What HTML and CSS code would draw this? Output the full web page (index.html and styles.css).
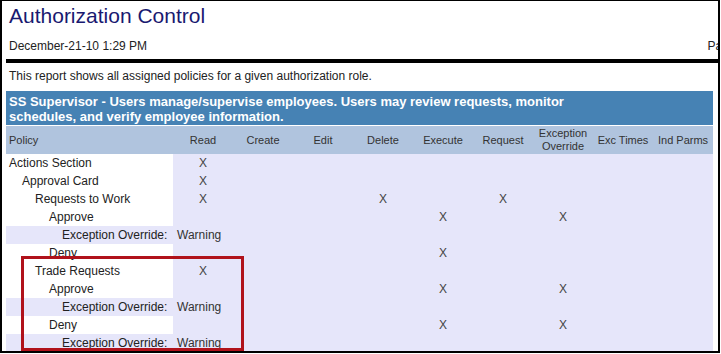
FILE: index.html
```html
<!DOCTYPE html>
<html lang="en">
<head>
    <meta charset="UTF-8">
    <meta name="viewport" content="width=device-width, initial-scale=1.0">
    <title>Authorization Control</title>
    <link rel="stylesheet" href="styles.css">
</head>
<body>
    <div class="frame">
        <h1 class="title">Authorization Control</h1>
        <div class="meta">
            <span>December-21-10 1:29 PM</span>
            <span class="page-no">Page 1 of 1</span>
        </div>
        <div class="rule"></div>
        <p class="intro">This report shows all assigned policies for a given authorization role.</p>

        <table class="policy-table">
            <colgroup>
                <col class="col-policy">
                <col span="9" class="col-flag">
            </colgroup>
            <thead>
                <tr class="role">
                    <th colspan="10"><div class="role-text">SS Supervisor - Users manage/supervise employees. Users may review requests, monitor schedules, and verify employee information.</div></th>
                </tr>
                <tr class="cols">
                    <th class="policy">Policy</th>
                    <th>Read</th>
                    <th>Create</th>
                    <th>Edit</th>
                    <th>Delete</th>
                    <th>Execute</th>
                    <th>Request</th>
                    <th>Exception<br>Override</th>
                    <th>Exc Times</th>
                    <th>Ind Parms</th>
                </tr>
            </thead>
            <tbody>
                <tr>
                    <td class="policy lvl0">Actions Section</td>
                    <td>X</td><td></td><td></td><td></td><td></td><td></td><td></td><td></td><td></td>
                </tr>
                <tr>
                    <td class="policy lvl1">Approval Card</td>
                    <td>X</td><td></td><td></td><td></td><td></td><td></td><td></td><td></td><td></td>
                </tr>
                <tr>
                    <td class="policy lvl2">Requests to Work</td>
                    <td>X</td><td></td><td></td><td>X</td><td></td><td>X</td><td></td><td></td><td></td>
                </tr>
                <tr>
                    <td class="policy lvl3">Approve</td>
                    <td></td><td></td><td></td><td></td><td>X</td><td></td><td>X</td><td></td><td></td>
                </tr>
                <tr class="override">
                    <td class="policy lvl4">Exception Override:</td>
                    <td colspan="9" class="note">Warning</td>
                </tr>
                <tr>
                    <td class="policy lvl3">Deny</td>
                    <td></td><td></td><td></td><td></td><td>X</td><td></td><td></td><td></td><td></td>
                </tr>
                <tr>
                    <td class="policy lvl2">Trade Requests</td>
                    <td>X</td><td></td><td></td><td></td><td></td><td></td><td></td><td></td><td></td>
                </tr>
                <tr>
                    <td class="policy lvl3">Approve</td>
                    <td></td><td></td><td></td><td></td><td>X</td><td></td><td>X</td><td></td><td></td>
                </tr>
                <tr class="override">
                    <td class="policy lvl4">Exception Override:</td>
                    <td colspan="9" class="note">Warning</td>
                </tr>
                <tr>
                    <td class="policy lvl3">Deny</td>
                    <td></td><td></td><td></td><td></td><td>X</td><td></td><td>X</td><td></td><td></td>
                </tr>
                <tr class="override">
                    <td class="policy lvl4">Exception Override:</td>
                    <td colspan="9" class="note">Warning</td>
                </tr>
            </tbody>
        </table>

        <div class="highlight"></div>
    </div>
</body>
</html>
```

FILE: styles.css
```css
body {
    margin: 0;
    padding: 0;
    background-color: #fff;
    font-family: 'Liberation Sans', Arial, sans-serif;
    color: #222;
}
.frame {
    position: relative;
    box-sizing: border-box;
    width: 720px;
    height: 353px;
    border: 2px solid #000;
    border-top-width: 1px;
    padding-left: 4px;
    overflow: hidden;
}
.title {
    margin: 0;
    padding: 3px 3px 0;
    font-size: 21px;
    line-height: 24px;
    font-weight: normal;
    color: #191970;
}
.meta {
    display: flex;
    width: 760px;
    margin-top: 11px;
    padding: 0 3px;
    font-size: 12px;
    line-height: 14px;
}
.page-no {
    margin-left: auto;
}
.rule {
    height: 4px;
    margin-top: 6px;
    margin-right: -4px;
    background-color: #000;
}
.intro {
    margin: 6px 0 8px;
    padding: 0 3px;
    font-size: 12px;
    line-height: 14px;
}
.policy-table {
    width: 707px;
    table-layout: fixed;
    border-collapse: collapse;
}
.col-policy {
    width: 167px;
}
.col-flag {
    width: 60px;
}
.role th {
    height: 34px;
    padding: 3px 3px 1px;
    box-sizing: border-box;
    background-color: #4682b4;
    color: #fff;
    font-size: 13px;
    line-height: 15px;
    font-weight: bold;
    text-align: left;
}
.role-text {
    max-width: 600px;
}
.cols th {
    height: 28px;
    padding: 0;
    border-top: 1px solid #fff;
    background-color: #b0c4de;
    color: #333;
    font-size: 11px;
    line-height: 13px;
    font-weight: normal;
    text-align: center;
}
.cols th.policy {
    padding-left: 3px;
    text-align: left;
}
.policy-table td {
    height: 18px;
    padding: 0;
    background-color: #e6e6fa;
    font-size: 12px;
    line-height: 14px;
    text-align: center;
    color: #444;
}
.policy-table td.policy {
    background-color: #fff;
    text-align: left;
    color: #222;
}
.override td.policy {
    background-color: #e6e6fa;
}
.policy-table td.note {
    padding-left: 4px;
    text-align: left;
    color: #333;
}
.lvl0 { padding-left: 3px !important; }
.lvl1 { padding-left: 16px !important; }
.lvl2 { padding-left: 29px !important; }
.lvl3 { padding-left: 43px !important; }
.lvl4 { padding-left: 56px !important; }

/* red box around the trade request rows */
.highlight {
    position: absolute;
    left: 19px;
    top: 255px;
    width: 223px;
    height: 95px;
    box-sizing: border-box;
    border: 3px solid #b0121b;
}
```
